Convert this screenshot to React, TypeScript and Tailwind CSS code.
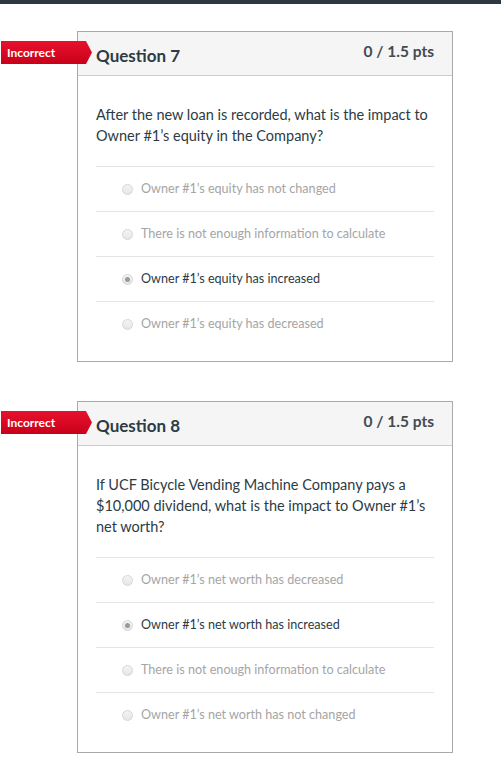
import React from "react";

type Answer = { text: string; selected?: boolean };

function Radio({ selected }: { selected?: boolean }) {
  return (
    <span className="relative flex h-[11px] w-[11px] shrink-0 items-center justify-center rounded-full border border-[#d6d6d6] bg-[linear-gradient(#f4f4f4,#e6e6e6)]">
      {selected && <span className="h-[5px] w-[5px] rounded-full bg-[#9a9a9a]" />}
    </span>
  );
}

function Badge() {
  return (
    <div className="absolute left-[-77px] top-[9px] flex h-[23px] items-center">
      <div className="flex h-[23px] w-[82px] items-center bg-[linear-gradient(#e8112d,#c8001a)] pl-[6px] text-[12px] font-bold text-white">
        Incorrect
      </div>
      <svg width="9" height="23" viewBox="0 0 9 23" className="block">
        <defs>
          <linearGradient id="bg" x1="0" y1="0" x2="0" y2="1">
            <stop offset="0" stopColor="#e8112d" />
            <stop offset="1" stopColor="#c8001a" />
          </linearGradient>
        </defs>
        <polygon points="0,0 3,0 9,11.5 3,23 0,23" fill="url(#bg)" />
      </svg>
    </div>
  );
}

function Question({
  num,
  lines,
  answers,
}: {
  num: number;
  lines: string[];
  answers: Answer[];
}) {
  return (
    <div className="relative ml-[77px] w-[376px] border border-[#aaaaaa] bg-white">
      <Badge />
      <div className="flex h-[44px] items-center justify-between border-b border-[#c7cdd1] bg-[#f5f5f5] pl-[18px] pr-[18px]">
        <span className="mt-[4px] text-[17px] font-bold text-[#2d3b45]">Question {num}</span>
        <span className="mb-[4px] text-[15.5px] font-bold text-[#444b50]">0 / 1.5 pts</span>
      </div>
      <div className="px-[18px] pb-[15px] pt-[28px]">
        <div className="text-[14.5px] leading-[21px] text-[#2d3b45]">
          {lines.map((l, i) => (
            <div key={i}>{l}</div>
          ))}
        </div>
        <div className="mt-[20px]">
          {answers.map((a, i) => (
            <div
              key={i}
              className={`flex h-[45px] items-center gap-[8px] border-t border-[#e4e4e4] pl-[26px] text-[12.6px] ${
                a.selected ? "text-[#2d3b45]" : "text-[#a5a5a5]"
              }`}
            >
              <Radio selected={a.selected} />
              <span>{a.text}</span>
            </div>
          ))}
        </div>
      </div>
    </div>
  );
}

export default function App() {
  return (
    <div
      className="min-h-[768px] w-[501px] bg-white"
      style={{ fontFamily: "Lato, 'Open Sans', sans-serif" }}
    >
      <div className="h-[4px] bg-[#2e3840]" />
      <div className="pt-[27px]">
        <Question
          num={7}
          lines={[
            "After the new loan is recorded, what is the impact to",
            "Owner #1\u2019s equity in the Company?",
          ]}
          answers={[
            { text: "Owner #1\u2019s equity has not changed" },
            { text: "There is not enough information to calculate" },
            { text: "Owner #1\u2019s equity has increased", selected: true },
            { text: "Owner #1\u2019s equity has decreased" },
          ]}
        />
        <div className="h-[39px]" />
        <Question
          num={8}
          lines={[
            "If UCF Bicycle Vending Machine Company pays a",
            "$10,000 dividend, what is the impact to Owner #1\u2019s",
            "net worth?",
          ]}
          answers={[
            { text: "Owner #1\u2019s net worth has decreased" },
            { text: "Owner #1\u2019s net worth has increased", selected: true },
            { text: "There is not enough information to calculate" },
            { text: "Owner #1\u2019s net worth has not changed" },
          ]}
        />
      </div>
    </div>
  );
}
